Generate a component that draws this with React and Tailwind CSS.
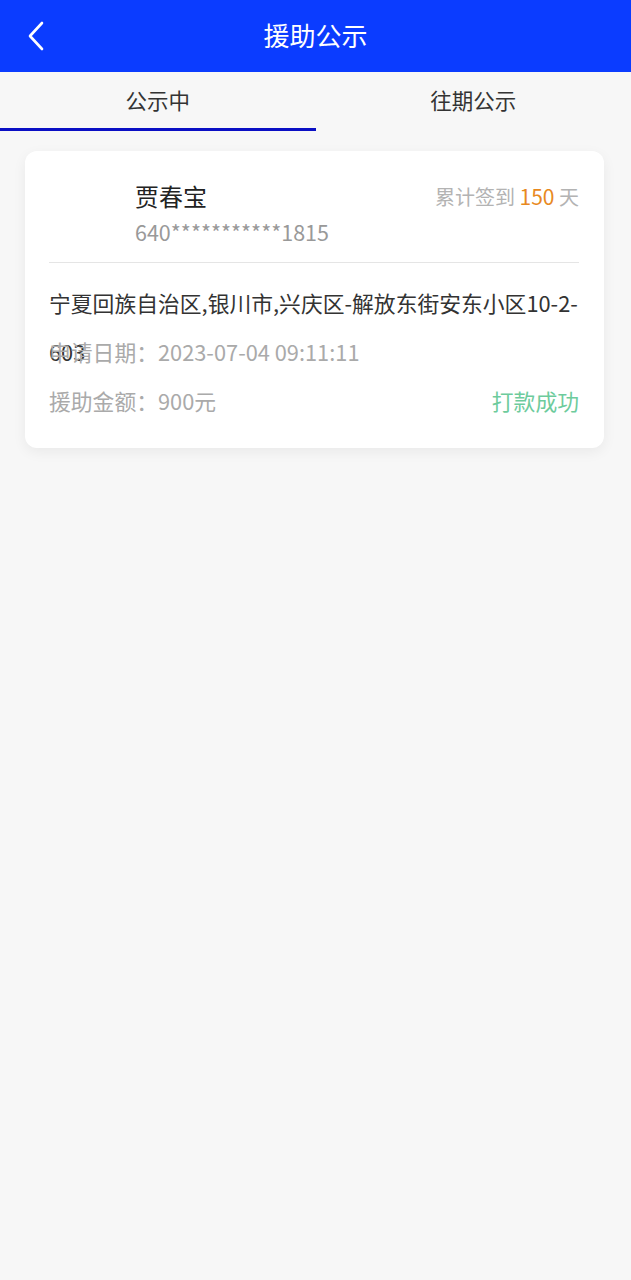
import React from 'react';

const font = { fontFamily: '"Noto Sans CJK SC", "Noto Sans", sans-serif' };

function Header() {
  return (
    <div className="h-[72px] bg-[#0b3cff] flex items-center relative">
      <button className="absolute left-[22px] top-[20px] w-[28px] h-[32px] flex items-center justify-center">
        <svg width="20" height="30" viewBox="0 0 20 30" fill="none">
          <path d="M16 2 L4 15 L16 28" stroke="#fff" strokeWidth="2.6" strokeLinecap="round" strokeLinejoin="round" />
        </svg>
      </button>
      <h1 className="flex-1 text-center text-white text-[26px] leading-none -mt-[2px]">援助公示</h1>
    </div>
  );
}

function Tabs() {
  return (
    <div className="flex h-[59px] bg-[#f7f7f7]">
      <div className="flex-1 flex flex-col">
        <div className="flex-1 flex items-center justify-center text-[21.5px] text-[#333]">公示中</div>
        <div className="h-[3px] bg-[#0a0fc4]" />
      </div>
      <div className="flex-1 flex flex-col">
        <div className="flex-1 flex items-center justify-center text-[21.5px] text-[#333]">往期公示</div>
        <div className="h-[3px]" />
      </div>
    </div>
  );
}

function Card() {
  return (
    <div className="ml-[25px] mr-[27px] mt-[20px] bg-white rounded-[12px] shadow-[0_4px_14px_rgba(0,0,0,0.06)] pl-[24px] pr-[25px] pb-[22px]">
      <div className="flex justify-between pt-[27px] pb-[12px] border-b border-[#e5e5e5]">
        <div className="pl-[86px]">
          <div className="text-[24px] leading-[36px] text-[#222]">贾春宝</div>
          <div className="text-[21.5px] leading-[36px] text-[#999]">640***********1815</div>
        </div>
        <div className="text-[20px] leading-[36px] text-[#b3b3b3]">
          累计签到 <span className="text-[#e8891e] text-[21px]">150</span> 天
        </div>
      </div>
      <div className="h-[49px] mt-[15px] text-[21.8px] leading-[49px] text-[#333] whitespace-nowrap overflow-visible">
        宁夏回族自治区,银川市,兴庆区-解放东街安东小区10-2-
        <br />
        603
      </div>
      <div className="h-[49px] text-[21.8px] leading-[49px] text-[#aaa]">申请日期：2023-07-04 09:11:11</div>
      <div className="h-[50px] flex justify-between text-[21.8px] leading-[50px]">
        <span className="text-[#aaa]">援助金额：900元</span>
        <span className="text-[#6dcb9c]">打款成功</span>
      </div>
    </div>
  );
}

export default function App() {
  return (
    <div className="min-h-[1280px] bg-[#f7f7f7]" style={font}>
      <Header />
      <Tabs />
      <Card />
    </div>
  );
}
